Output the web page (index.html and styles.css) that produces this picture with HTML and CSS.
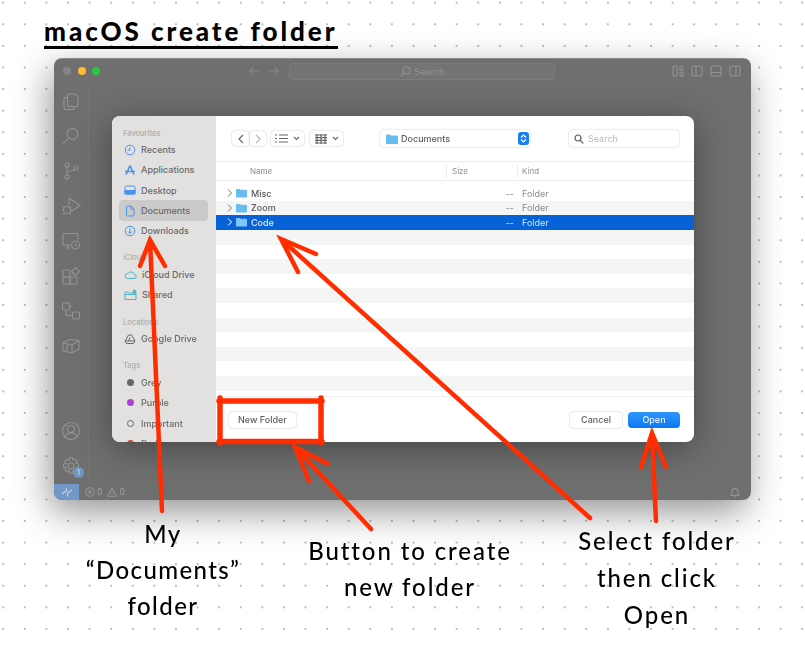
FILE: index.html
```html
<!DOCTYPE html>
<html lang="en">
<head>
    <meta charset="UTF-8">
    <meta name="viewport" content="width=device-width, initial-scale=1.0">
    <title>macOS create folder</title>
    <link rel="stylesheet" href="styles.css">
</head>
<body>
<div class="board">
    <h1 class="board-title">macOS create folder</h1>

    <div class="window">
        <div class="titlebar">
            <div class="lights">
                <span class="light light-grey"></span>
                <span class="light light-yellow"></span>
                <span class="light light-green"></span>
            </div>
            <div class="nav-arrows">
                <svg width="12" height="10" viewBox="0 0 12 10"><path d="M11 5H1.5M5.5 1 1.5 5l4 4"/></svg>
                <svg width="12" height="10" viewBox="0 0 12 10"><path d="M1 5h9.500M6.500 1l4 4-4 4"/></svg>
            </div>
            <div class="command-box">
                <svg width="11" height="11" viewBox="0 0 11 11"><circle cx="6.500" cy="4.500" r="3.500"/><path d="M4 7 1 10"/></svg>
                <span>Search</span>
            </div>
            <div class="layout-icons">
                <svg width="12" height="12" viewBox="0 0 12 12"><rect x="1" y="1" width="4" height="10" rx="1"/><rect x="8" y="1" width="3" height="4" rx="1"/><rect x="8" y="7" width="3" height="4" rx="1"/></svg>
                <svg width="12" height="12" viewBox="0 0 12 12"><rect x="1" y="1" width="10" height="10" rx="1.500"/><path d="M5 1v10"/></svg>
                <svg width="12" height="12" viewBox="0 0 12 12"><rect x="1" y="1" width="10" height="10" rx="1.500"/><path d="M1 7.500h10"/></svg>
                <svg width="12" height="12" viewBox="0 0 12 12"><rect x="1" y="1" width="10" height="10" rx="1.500"/><path d="M7 1v10"/></svg>
            </div>
        </div>

        <div class="workbench">
            <div class="activity">
                <div class="activity-top">
                    <svg width="20" height="20" viewBox="0 0 20 20"><path d="M8 3h6l3 3v8a1.500 1.500 0 0 1-1.500 1.500H8A1.500 1.500 0 0 1 6.500 14V4.500A1.500 1.500 0 0 1 8 3z"/><path d="M6.500 6.500H4.500A1.500 1.500 0 0 0 3 8v9a1.500 1.500 0 0 0 1.500 1.500h7a1.500 1.500 0 0 0 1.500-1.500v-1.500"/></svg>
                    <svg width="20" height="20" viewBox="0 0 20 20"><circle cx="11.500" cy="8" r="5.500"/><path d="M7.500 12 2 18"/></svg>
                    <svg width="20" height="20" viewBox="0 0 20 20"><circle cx="6" cy="4" r="2"/><circle cx="6" cy="16" r="2"/><circle cx="15" cy="7" r="2"/><path d="M6 6v8M6 12c0-3 7-1.500 8-3.500"/></svg>
                    <svg width="20" height="20" viewBox="0 0 20 20"><path d="M8 9V2l11 7.500-9 6"/><circle cx="6" cy="14" r="3.500"/><path d="M2 11l1.500 1M10 11l-1.500 1M1.500 14h1M9.500 14h1M2 18l1.500-1M10 18l-1.500-1"/></svg>
                    <svg width="20" height="20" viewBox="0 0 20 20"><path d="M9 14H3a1 1 0 0 1-1-1V3.500a1 1 0 0 1 1-1h13a1 1 0 0 1 1 1V9M5 17h4M7 14v3"/><circle cx="14.500" cy="14" r="4"/><path d="M14.500 12v2.500h2"/></svg>
                    <svg width="20" height="20" viewBox="0 0 20 20"><rect x="2" y="4" width="7" height="7" rx=".5"/><rect x="2" y="11" width="7" height="7" rx=".5"/><rect x="9" y="11" width="7" height="7" rx=".5"/><path d="M14.500 1.500l4 4-4 4-4-4z"/></svg>
                    <svg width="20" height="20" viewBox="0 0 20 20"><rect x="1.500" y="2" width="7" height="7" rx="1.500"/><rect x="11.500" y="11" width="7" height="7" rx="1.500"/><path d="M5 9v5.500h6.500M8.500 5.500H11"/></svg>
                    <svg width="20" height="20" viewBox="0 0 20 20"><path d="M2 7l6-3.500 10 1V13l-7 4-9-2zM2 7l9 2 7-4.500M11 9v8M6 8v8"/></svg>
                </div>
                <div class="activity-bottom">
                    <svg width="20" height="20" viewBox="0 0 20 20"><circle cx="10" cy="10" r="8.500"/><circle cx="10" cy="8" r="3.500"/><path d="M4 16c1-3 3.500-4 6-4s5 1 6 4"/></svg>
                    <div class="gear">
                        <svg width="20" height="20" viewBox="0 0 20 20"><circle cx="10" cy="10" r="3"/><path d="M8.500 1.500h3l.5 2.500 2-.8 2.200 2.200-1.200 2 2.500.6v3l-2.500.6 1.200 2-2.200 2.200-2-1.200-.5 2.500h-3l-.5-2.500-2 1.200-2.200-2.200 1.200-2-2.500-.6v-3l2.500-.6-1.200-2L6 3.200l2 .8z"/></svg>
                        <span class="badge">1</span>
                    </div>
                </div>
            </div>

            <div class="editor">
                <div class="dialog">
                    <div class="sidebar">
                        <div class="side-section">
                            <div class="side-label">Favourites</div>
                            <div class="side-item">
                                <svg class="side-icon" width="12" height="12" viewBox="0 0 12 12"><circle cx="6" cy="6" r="4.800"/><path d="M6 3v3.200H3.500"/></svg>
                                Recents
                            </div>
                            <div class="side-item">
                                <svg class="side-icon" width="12" height="12" viewBox="0 0 12 12"><path d="M6 1.500 2 10.500M6 1.500l4 9M1 7.500h10" stroke-width="1.600"/></svg>
                                Applications
                            </div>
                            <div class="side-item">
                                <svg class="side-icon" width="12" height="12" viewBox="0 0 12 12"><rect x="1" y="2" width="10" height="8" rx="1.500"/><rect x="1" y="6.500" width="10" height="3.500" class="icon-fill"/></svg>
                                Desktop
                            </div>
                            <div class="side-item side-item-active">
                                <svg class="side-icon" width="12" height="12" viewBox="0 0 12 12"><path d="M2.500 2a1 1 0 0 1 1-1H7l3 3v6a1 1 0 0 1-1 1H3.500a1 1 0 0 1-1-1zM7 1v3h3"/></svg>
                                Documents
                            </div>
                            <div class="side-item">
                                <svg class="side-icon" width="12" height="12" viewBox="0 0 12 12"><circle cx="6" cy="6" r="4.800"/><path d="M6 3v5.500M4 6.500l2 2 2-2"/></svg>
                                Downloads
                            </div>
                        </div>
                        <div class="side-section">
                            <div class="side-label">iCloud</div>
                            <div class="side-item">
                                <svg class="side-icon side-icon-teal" width="13" height="12" viewBox="0 0 13 12"><path d="M3.500 9.500h6.500a2 2 0 0 0 .3-4A3.500 3.500 0 0 0 4 4.500a2.500 2.500 0 0 0-.5 5z"/></svg>
                                iCloud Drive
                            </div>
                            <div class="side-item">
                                <svg class="side-icon side-icon-teal" width="13" height="12" viewBox="0 0 13 12"><path d="M1 3h3.500l1 1H12v6.500H1zM1 5.500h11"/><circle cx="10.500" cy="2.500" r="1.500" class="icon-fill"/></svg>
                                Shared
                            </div>
                        </div>
                        <div class="side-section">
                            <div class="side-label">Locations</div>
                            <div class="side-item">
                                <svg class="side-icon side-icon-grey" width="12" height="12" viewBox="0 0 12 12"><path d="M4.500 2h3l3.500 6-1.500 2.500h-7L1 8zM1 8h10M6 4.500 4.500 8"/></svg>
                                Google Drive
                            </div>
                        </div>
                        <div class="side-section">
                            <div class="side-label">Tags</div>
                            <div class="side-item"><span class="tag tag-grey"></span>Grey</div>
                            <div class="side-item"><span class="tag tag-purple"></span>Purple</div>
                            <div class="side-item"><span class="tag tag-open"></span>Important</div>
                            <div class="side-item"><span class="tag tag-red"></span>Red</div>
                        </div>
                    </div>

                    <div class="browser">
                        <div class="toolbar">
                            <div class="tool-btn tool-back"><svg width="6" height="10" viewBox="0 0 6 10"><path d="M5 1 1 5l4 4"/></svg></div>
                            <div class="tool-btn tool-forward"><svg width="6" height="10" viewBox="0 0 6 10"><path d="M1 1l4 4-4 4"/></svg></div>
                            <div class="tool-btn tool-view">
                                <svg width="13" height="9" viewBox="0 0 13 9"><path d="M0 1h2M4 1h9M0 4.500h2M4 4.500h9M0 8h2M4 8h9"/></svg>
                                <svg width="7" height="5" viewBox="0 0 7 5"><path d="M1 1l2.500 2.500L6 1"/></svg>
                            </div>
                            <div class="tool-btn tool-view tool-grid">
                                <svg width="12" height="10" viewBox="0 0 12 10"><path d="M0 1h12M0 3.700h12M0 6.300h12M0 9h12M2 0v10M6 0v10M10 0v10"/></svg>
                                <svg width="7" height="5" viewBox="0 0 7 5"><path d="M1 1l2.500 2.500L6 1"/></svg>
                            </div>
                            <div class="path-popup">
                                <svg class="folder" width="12" height="10" viewBox="0 0 12 10"><path d="M0 1.500A1 1 0 0 1 1 .5h3l1 1h6a1 1 0 0 1 1 1V9a1 1 0 0 1-1 1H1a1 1 0 0 1-1-1z"/></svg>
                                <span>Documents</span>
                                <span class="popup-stepper"><svg width="7" height="9" viewBox="0 0 7 9"><path d="M1 3.500 3.500 1 6 3.500M1 5.500 3.500 8 6 5.500"/></svg></span>
                            </div>
                            <div class="search-field">
                                <svg width="10" height="10" viewBox="0 0 10 10"><circle cx="4" cy="4" r="3"/><path d="M6.300 6.300 9.300 9.300"/></svg>
                                <span>Search</span>
                            </div>
                        </div>

                        <div class="columns">
                            <div class="col col-name">Name</div>
                            <div class="col col-size">Size</div>
                            <div class="col col-kind">Kind</div>
                        </div>

                        <div class="list">
                            <div class="row">
                                <svg class="chevron" width="6" height="8" viewBox="0 0 6 8"><path d="M1 .5 4.500 4 1 7.500"/></svg>
                                <svg class="folder" width="11" height="10" viewBox="0 0 12 10"><path d="M0 1.500A1 1 0 0 1 1 .5h3l1 1h6a1 1 0 0 1 1 1V9a1 1 0 0 1-1 1H1a1 1 0 0 1-1-1z"/></svg>
                                <span class="row-name">Misc</span><span class="row-size">--</span><span class="row-kind">Folder</span>
                            </div>
                            <div class="row row-stripe">
                                <svg class="chevron" width="6" height="8" viewBox="0 0 6 8"><path d="M1 .5 4.500 4 1 7.500"/></svg>
                                <svg class="folder" width="11" height="10" viewBox="0 0 12 10"><path d="M0 1.500A1 1 0 0 1 1 .5h3l1 1h6a1 1 0 0 1 1 1V9a1 1 0 0 1-1 1H1a1 1 0 0 1-1-1z"/></svg>
                                <span class="row-name">Zoom</span><span class="row-size">--</span><span class="row-kind">Folder</span>
                            </div>
                            <div class="row row-selected">
                                <svg class="chevron" width="6" height="8" viewBox="0 0 6 8"><path d="M1 .5 4.500 4 1 7.500"/></svg>
                                <svg class="folder" width="11" height="10" viewBox="0 0 12 10"><path d="M0 1.500A1 1 0 0 1 1 .5h3l1 1h6a1 1 0 0 1 1 1V9a1 1 0 0 1-1 1H1a1 1 0 0 1-1-1z"/></svg>
                                <span class="row-name">Code</span><span class="row-size">--</span><span class="row-kind">Folder</span>
                            </div>
                            <div class="list-filler"></div>
                        </div>

                        <div class="footer">
                            <div class="btn">New Folder</div>
                            <div class="footer-right">
                                <div class="btn btn-cancel">Cancel</div>
                                <div class="btn btn-open">Open</div>
                            </div>
                        </div>
                    </div>
                </div>
            </div>
        </div>

        <div class="statusbar">
            <div class="remote"><svg width="12" height="12" viewBox="0 0 12 12"><path d="M1 8l4-3M11 4 7 7M5 1.500l.8 4M7 10.500l-.8-4"/></svg></div>
            <div class="problems">
                <svg width="10" height="10" viewBox="0 0 10 10"><circle cx="5" cy="5" r="4.300"/><path d="M3.200 3.200l3.600 3.600M6.800 3.200 3.200 6.800"/></svg>
                <span>0</span>
                <svg width="10" height="10" viewBox="0 0 10 10"><path d="M5 .8 9.500 9.200H.5zM5 4v2.500M5 7.500v.5"/></svg>
                <span>0</span>
            </div>
            <svg class="bell" width="10" height="11" viewBox="0 0 10 11"><path d="M1 8.500h8L8 7V4.500a3 3 0 0 0-6 0V7zM4 10h2"/></svg>
        </div>
    </div>

    <svg class="marks" width="805" height="645" viewBox="0 0 805 645">
        <!-- Documents -->
        <path d="M162 511 150 240M140 266 150 240 165 266"/>
        <!-- Code -->
        <path d="M590 518 282 240M298 272 281 239 316 254"/>
        <!-- New Folder box -->
        <path class="mark-box" d="M220 398V443M219 401H322M321 398V443M219 441.500H322"/>
        <!-- New Folder arrow -->
        <path d="M371 529 296 448M309 481 295 447 328 464"/>
        <!-- Open -->
        <path d="M656 521 652 434M641 467 652 433 666 467"/>
    </svg>

    <div class="note note-docs">My<br>“Documents”<br>folder</div>
    <div class="note note-new">Button to create<br>new folder</div>
    <div class="note note-open">Select folder<br>then click<br>Open</div>
</div>
</body>
</html>
```

FILE: styles.css
```css
body{
    margin: 0;
    background-color: #ffffff;
    font-family: "Inter", "Liberation Sans", sans-serif;
}
.board{/*whiteboard with the dots*/
    position: relative;
    width: 805px;
    height: 645px;
    overflow: hidden;
    background-image: radial-gradient(circle, #bdbdbd 1px, transparent 1.4px);
    background-size: 21.6px 21.6px;
    background-position: -7.6px -8.1px;
}
.board-title{
    position: absolute;
    left: 44px;
    top: 16px;
    margin: 0;
    border-bottom: 3px solid #000000;
    font-family: "Lato", sans-serif;
    font-size: 26px;
    font-weight: 900;
    line-height: 30px;
    letter-spacing: 2.950px;
    white-space: nowrap;
    color: #000000;
}

/* app window */
.window{
    position: absolute;
    left: 54px;
    top: 58px;
    width: 697px;
    height: 442px;
    display: flex;
    flex-direction: column;
    border-radius: 8px;
    overflow: hidden;
    background-color: #6f6f6f;
    filter: blur(.35px);
}
.board::before{/*shadow of the window, the blur filter would clip it*/
    content: "";
    position: absolute;
    left: 54px;
    top: 58px;
    width: 697px;
    height: 442px;
    border-radius: 8px;
    box-shadow: -4px 12px 36px rgba(0,0,0,.42);
}
.titlebar{
    height: 26px;
    flex: none;
    display: flex;
    align-items: center;
    box-shadow: inset 0 1px 0 rgba(255,255,255,.18);
}
.titlebar svg, .activity svg, .statusbar svg{
    fill: none;
    stroke: #949494;
    stroke-width: 1.1;
}
.lights{
    display: flex;
    gap: 6.500px;
    padding-left: 9px;
    width: 194px;
    box-sizing: border-box;
}
.light{
    width: 8px;
    height: 8px;
    border-radius: 50%;
}
.light-grey{ background-color: #838383; }
.light-yellow{ background-color: #febc2e; }
.light-green{ background-color: #28c840; }
.nav-arrows{
    display: flex;
    gap: 8px;
    width: 41px;
}
.nav-arrows svg{ stroke: #858585; }
.command-box{
    width: 266px;
    height: 17px;
    display: flex;
    align-items: center;
    justify-content: center;
    gap: 4px;
    border: 1px solid #7c7c7c;
    border-radius: 4px;
    background-color: #747474;
    box-sizing: border-box;
    font-size: 9px;
    color: #949494;
}
.layout-icons{
    display: flex;
    gap: 7px;
    margin-left: auto;
    padding-right: 10px;
}
.workbench{
    flex: 1;
    display: flex;
    min-height: 0;
}
.activity{
    width: 35px;
    flex: none;
    display: flex;
    flex-direction: column;
    justify-content: space-between;
    align-items: center;
    padding: 7px 0 8px;
    box-sizing: border-box;
    border-right: 1px solid #757575;
}
.activity-top{
    display: flex;
    flex-direction: column;
    gap: 15px;
}
.activity-bottom{
    display: flex;
    flex-direction: column;
    gap: 15px;
}
.activity svg{ display: block; }
.gear{ position: relative; }
.badge{
    position: absolute;
    right: -3px;
    bottom: -2px;
    width: 11px;
    height: 11px;
    border-radius: 50%;
    background-color: #6d94c4;
    color: #e8eef6;
    font-size: 7px;
    line-height: 11px;
    text-align: center;
}
.editor{
    flex: 1;
    padding: 32px 0 0 23px;
    box-sizing: border-box;
}

/* save dialog */
.dialog{
    width: 582px;
    height: 326px;
    display: flex;
    border-radius: 8px;
    overflow: hidden;
    background-color: #ffffff;
    box-shadow: 0 6px 34px rgba(0,0,0,.38);
}
.sidebar{
    width: 104px;
    flex: none;
    padding-top: 11.500px;
    box-sizing: border-box;
    background-color: #e2e1df;
}
.side-section{ margin-bottom: 11.500px; }
.side-label{
    height: 12px;
    padding-left: 11px;
    font-size: 7.500px;
    line-height: 12px;
    font-weight: 500;
    color: #aeadab;
}
.side-item{
    height: 20.300px;
    margin: 0 8px 0 7px;
    padding-left: 5px;
    display: flex;
    align-items: center;
    gap: 5px;
    border-radius: 4px;
    font-size: 9px;
    font-weight: 500;
    color: #696969;
}
.side-item-active{ background-color: #cbcac9; }
.side-icon{
    flex: none;
    fill: none;
    stroke: #4b92ee;
    stroke-width: 1;
}
.side-icon-teal{ stroke: #4fb4c8; }
.side-icon-grey{ stroke: #6a6a6a; }
.icon-fill{ fill: currentColor; color: #4b92ee; }
.side-icon-teal .icon-fill{ color: #4fb4c8; }
.tag{
    width: 7px;
    height: 7px;
    margin: 0 2.500px;
    flex: none;
    border-radius: 50%;
    box-sizing: border-box;
}
.tag-grey{ background-color: #66666a; }
.tag-purple{ background-color: #ad3fd6; }
.tag-open{ border: 1px solid #6a6a6a; }
.tag-red{ background-color: #e5403a; }

.browser{
    flex: 1;
    display: flex;
    flex-direction: column;
    min-width: 0;
}
.toolbar{
    height: 45px;
    flex: none;
    display: flex;
    align-items: center;
    padding: 0 15px 0 16px;
    box-sizing: border-box;
    font-size: 9px;
}
.toolbar svg{
    fill: none;
    stroke: #666666;
    stroke-width: 1.2;
    flex: none;
}
.tool-btn{
    height: 15px;
    display: flex;
    align-items: center;
    justify-content: center;
    gap: 5px;
    border-radius: 4px;
    background-color: #ffffff;
    box-shadow: 0 0 2px rgba(0,0,0,.28);
}
.tool-back{ width: 17px; }
.tool-forward{ width: 16px; margin-left: 1px; }
.toolbar .tool-forward svg{ stroke: #b9b9b9; }
.tool-view{ width: 33px; margin-left: 5px; }
.tool-grid{ margin-left: 6px; }
.path-popup{
    width: 150px;
    height: 17px;
    margin-left: 37px;
    padding: 0 1px 0 6px;
    display: flex;
    align-items: center;
    gap: 3px;
    box-sizing: border-box;
    border-radius: 4px;
    background-color: #ffffff;
    box-shadow: 0 0 2px rgba(0,0,0,.25);
    font-weight: 500;
    color: #5f5f5f;
}
.popup-stepper{
    width: 11px;
    height: 13px;
    margin-left: auto;
    display: flex;
    align-items: center;
    justify-content: center;
    border-radius: 3px;
    background-color: #1a7ff0;
}
.toolbar .popup-stepper svg{ stroke: #ffffff; }
.toolbar .folder, .row .folder{
    fill: #66bdee;
    stroke: none;
    flex: none;
}
.search-field{
    width: 110px;
    height: 17px;
    margin-left: auto;
    padding-left: 5px;
    display: flex;
    align-items: center;
    gap: 4px;
    box-sizing: border-box;
    border-radius: 4px;
    background-color: #ffffff;
    box-shadow: 0 0 2px rgba(0,0,0,.25);
    color: #b9b9b9;
}
.toolbar .search-field svg{ stroke: #555555; }

.columns{
    height: 20px;
    flex: none;
    display: flex;
    align-items: center;
    box-sizing: border-box;
    border-top: 1px solid #ececec;
    border-bottom: 1px solid #ececec;
    font-size: 8px;
    color: #8f8f8f;
}
.col{
    height: 13px;
    line-height: 13px;
    box-sizing: border-box;
}
.col-name{ width: 230px; padding-left: 34px; }
.col-size{ width: 71px; padding-left: 5px; border-left: 1px solid #ececec; }
.col-kind{ flex: 1; padding-left: 4px; border-left: 1px solid #ececec; }

.list{
    flex: 1;
    display: flex;
    flex-direction: column;
    min-height: 0;
    padding-top: 5px;
    box-sizing: border-box;
    border-bottom: 1px solid #eeeeee;
}
.row{
    height: 14.600px;
    flex: none;
    padding-left: 11px;
    display: flex;
    align-items: center;
    font-size: 9px;
    color: #5a5a5a;
}
.row-stripe{ background-color: #f4f5f5; }
.row-selected{
    background-color: #0662d6;
    color: #e4eefb;
}
.chevron{
    flex: none;
    fill: none;
    stroke: #777777;
    stroke-width: 1;
    margin-right: 3px;
}
.row-selected .chevron{ stroke: #ffffff; }
.row .folder{ margin-right: 4px; }
.row-selected .folder{ fill: #7fc6f2; }
.row-name{ flex: 1; font-weight: 500; }
.row-size{ margin-right: 8px; color: #8a8a8a; }
.row-kind{
    width: 172px;
    flex: none;
    color: #8a8a8a;
}
.row-selected .row-size, .row-selected .row-kind{ color: #d5e4f8; }
.list-filler{
    height: 160.800px;
    flex: none;
    background-image: repeating-linear-gradient(#f4f5f5 0, #f4f5f5 14.600px, #ffffff 14.600px, #ffffff 29.200px);
}
.footer{
    height: 45px;
    flex: none;
    display: flex;
    align-items: center;
    justify-content: space-between;
    padding: 0 14px 0 13px;
    box-sizing: border-box;
}
.footer-right{
    display: flex;
    gap: 6px;
}
.btn{
    height: 16px;
    padding: 0 9px;
    border-radius: 4px;
    background-color: #ffffff;
    box-shadow: 0 0 2px rgba(0,0,0,.28);
    font-size: 9px;
    font-weight: 500;
    line-height: 16px;
    text-align: center;
    color: #616161;
}
.btn-cancel, .btn-open{
    width: 52px;
    padding: 0;
    box-sizing: border-box;
}
.btn-open{
    background-image: linear-gradient(#3296fb, #0a78f5);
    box-shadow: none;
    color: #e9f3ff;
}

.statusbar{
    height: 16px;
    flex: none;
    display: flex;
    align-items: center;
    font-size: 8.500px;
    color: #a2a2a2;
}
.remote{
    width: 25px;
    height: 16px;
    display: flex;
    align-items: center;
    justify-content: center;
    background-color: #7198c6;
}
.statusbar .remote svg{ stroke: #c4d5ea; }
.problems{
    display: flex;
    align-items: center;
    gap: 2px;
    padding-left: 6px;
}
.problems span{ margin-right: 3px; }
.bell{ margin-left: auto; margin-right: 11px; }

/* red marks and notes drawn over the screenshot */
.marks{
    position: absolute;
    left: 0;
    top: 0;
    fill: none;
    stroke: #ff2d00;
    stroke-width: 4.500;
    stroke-linecap: round;
    stroke-linejoin: miter;
}
.mark-box{ stroke-width: 5.500; }
.note{
    position: absolute;
    text-align: center;
    font-family: "Lato", sans-serif;
    font-size: 24px;
    font-weight: 500;
    letter-spacing: 1.900px;
    white-space: nowrap;
    color: #000000;
    transform: translateX(-50%);
}
.note-docs{ left: 163px; top: 516px; line-height: 36px; letter-spacing: 1.400px; }
.note-new{ left: 410px; top: 533px; line-height: 36px; }
.note-open{ left: 657px; top: 522px; line-height: 37px; }
```
